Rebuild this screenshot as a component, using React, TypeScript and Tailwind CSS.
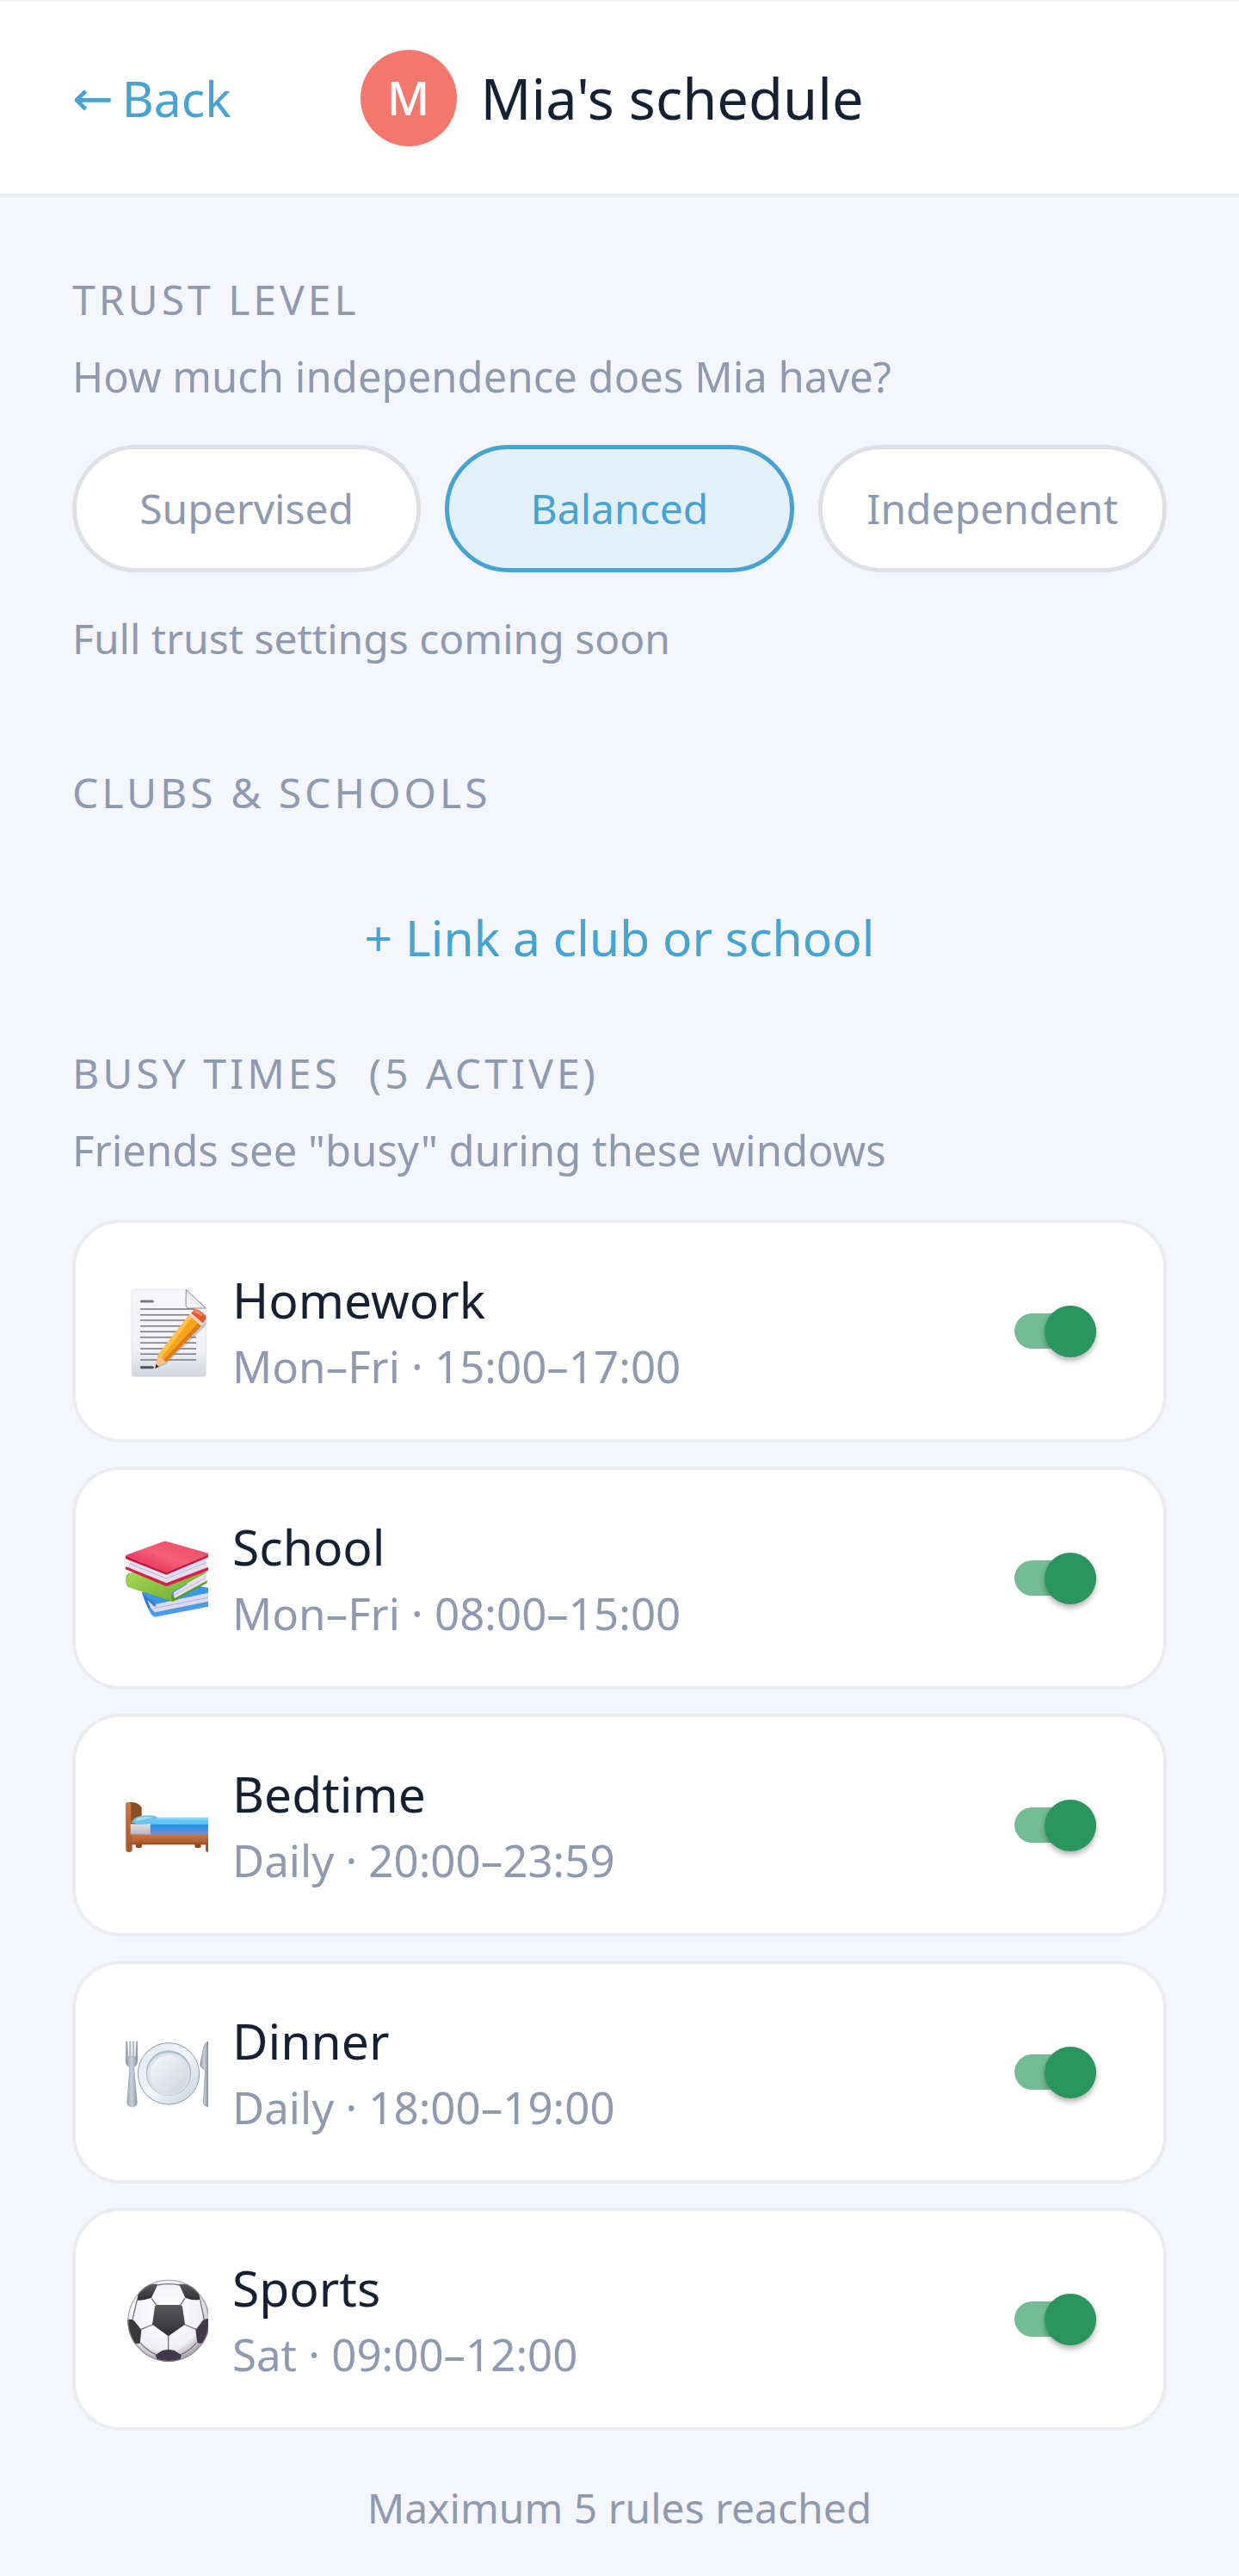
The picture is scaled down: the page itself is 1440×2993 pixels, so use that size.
import { useId, useState } from "react";
import type { ReactNode } from "react";

const trustLevels = ["Supervised", "Balanced", "Independent"];

function NoteIcon() {
  return (
    <svg viewBox="48 32 288 336" className="h-28 w-24 shrink-0" aria-hidden="true">
      <defs>
        <linearGradient id="note-paper" x1="0" y1="0" x2="0" y2="1">
          <stop offset="0" stopColor="#f7f7fa" />
          <stop offset="0.7" stopColor="#f1f1f7" />
          <stop offset="1" stopColor="#d3d4e0" />
        </linearGradient>
        <linearGradient id="note-fold" x1="0" y1="1" x2="1" y2="0">
          <stop offset="0" stopColor="#ffffff" />
          <stop offset="1" stopColor="#cfd0d8" />
        </linearGradient>
      </defs>
      <path d="M78 54H259L328 119V348Q328 357 319 357H78Q69 357 69 348V63Q69 54 78 54Z" fill="url(#note-paper)" stroke="#d9d9e0" strokeWidth="2" />
      <path d="M259 54L328 119H268Q259 117 258 108Z" fill="url(#note-fold)" stroke="#8d8e98" strokeWidth="3" />
      <path d="M103 95H142" stroke="#7b7b83" strokeWidth="9" strokeLinecap="round" />
      <path d="M99 122H290M99 142H294M99 161H294M99 181H294M99 201H294M99 220H294M99 240H294M99 260H294M99 279H294M99 299H294" stroke="#77777f" strokeWidth="4.5" />
      <path d="M103 325H142" stroke="#4f4f58" strokeWidth="9" strokeLinecap="round" />
      <path d="M158 328L190 312L328 180V150L300 140Z" fill="#9a8f90" opacity="0.45" />
      <path d="M161 281L271 140L317 175L190 306L152 328Z" fill="#f9a21a" />
      <path d="M161 281L271 140L282 148L172 292Z" fill="#ffc34d" />
      <path d="M180 300L305 166L317 175L190 306Z" fill="#d97d16" />
      <path d="M161 281Q160 292 174 290Q178 302 190 306L152 328Z" fill="#f6c38e" />
      <path d="M154 314L164 322L151 330Z" fill="#2e2b2d" />
      <path d="M271 145L277 135L322 169L312 181Z" fill="#f0d3c4" />
      <path d="M277 136L285 126Q292 119 304 126L320 138Q330 147 327 156L317 171Z" fill="#e4592f" />
      <path d="M283 130Q292 121 304 128L319 141L313 147L284 131Z" fill="#f58a5c" />
    </svg>
  );
}

function BooksIcon() {
  return (
    <svg viewBox="48 22 288 336" className="h-28 w-24 shrink-0" aria-hidden="true">
      <defs>
        <linearGradient id="book-red" x1="1" y1="0" x2="0" y2="1">
          <stop offset="0" stopColor="#e94a60" />
          <stop offset="0.5" stopColor="#f45f78" />
          <stop offset="1" stopColor="#e01b4c" />
        </linearGradient>
        <linearGradient id="book-green" x1="0" y1="0" x2="1" y2="1">
          <stop offset="0" stopColor="#a6dd5a" />
          <stop offset="1" stopColor="#6aa52c" />
        </linearGradient>
      </defs>
      <path d="M104 238L240 205L336 222V242L152 282Z" fill="#3c96e8" />
      <path d="M124 254L152 280L336 240V272L152 308L134 290Z" fill="#ddd9ee" />
      <path d="M148 294L336 256" stroke="#b6b3d2" strokeWidth="3" />
      <path d="M130 286L150 308L336 270V288L150 324Q142 322 136 314L124 290Z" fill="#4b9ce8" />
      <path d="M104 238L152 278V288L146 286L124 264L134 290L128 296L118 276Z" fill="#2b7cd0" />
      <path d="M60 171Q46 180 50 204Q52 217 60 220L204 269Q212 272 220 267L332 206V196L222 254Z" fill="#5d9a28" />
      <path d="M60 171L130 155L334 168L218 232Q208 237 208 250Q206 266 212 270L60 220Q46 212 50 190Z" fill="url(#book-green)" />
      <path d="M216 238Q214 254 220 258L328 200V172Z" fill="#e5dff0" />
      <path d="M216 248L330 186" stroke="#c4bcd6" strokeWidth="3" />
      <path d="M56 118L190 174L330 116V156L190 210L56 154Z" fill="#e4dff0" />
      <path d="M62 138L190 190L330 134" fill="none" stroke="#b9b4cf" strokeWidth="3" />
      <path d="M48 148L190 206L336 150V162L190 218L48 158Z" fill="#d91f49" />
      <path d="M46 110L190 168L336 106V116L190 177L46 120Z" fill="#c9173f" />
      <path d="M46 110L180 61Q186 59 194 62L336 102V108L190 169Z" fill="url(#book-red)" />
    </svg>
  );
}

function BedIcon() {
  return (
    <svg viewBox="48 14 288 336" className="h-28 w-24 shrink-0" aria-hidden="true">
      <defs>
        <linearGradient id="bed-wood" x1="0" y1="0" x2="0" y2="1">
          <stop offset="0" stopColor="#c9784a" />
          <stop offset="1" stopColor="#a85626" />
        </linearGradient>
        <linearGradient id="bed-side" x1="0" y1="0" x2="0" y2="1">
          <stop offset="0" stopColor="#1a94e0" />
          <stop offset="1" stopColor="#6d8ee2" />
        </linearGradient>
        <linearGradient id="bed-mattress" x1="0" y1="0" x2="0" y2="1">
          <stop offset="0" stopColor="#e3dfe6" />
          <stop offset="1" stopColor="#b9b4bf" />
        </linearGradient>
      </defs>
      <path d="M83 245H105V255Q105 260 98 260H90Q83 260 83 254ZM289 245H311V255Q311 260 304 260H296Q289 260 289 254Z" fill="#8e471f" />
      <path d="M56 102Q64 99 76 101Q98 106 104 120V190H66V106Z" fill="#8a4f23" />
      <path d="M62 212H336V249H62Z" fill="url(#bed-wood)" />
      <path d="M48 108Q48 101 57 101Q67 101 67 110V212L71 240V266Q71 275 60 275Q49 275 49 266Z" fill="url(#bed-wood)" />
      <path d="M327 244H336V275Q327 275 327 266Z" fill="#a85626" />
      <path d="M65 177H138V213H65Z" fill="url(#bed-mattress)" />
      <path d="M134 178L158 154H336V185H134Z" fill="#61c5f3" />
      <path d="M152 160L160 154H336V163Z" fill="#8bd9f8" />
      <path d="M134 178H336V213H140Q134 213 134 207Z" fill="url(#bed-side)" />
      <path d="M70 168Q80 147 124 147Q152 146 158 153Q152 168 136 176Q100 182 70 172Z" fill="#6cc5ee" />
      <path d="M84 158Q110 148 144 153Q116 162 84 166Z" fill="#a3e0f7" />
      <path d="M62 245H336" stroke="#9b4d22" strokeWidth="5" />
    </svg>
  );
}

function PlateIcon() {
  return (
    <svg viewBox="48 20 288 336" className="h-28 w-24 shrink-0" aria-hidden="true">
      <defs>
        <linearGradient id="plate-rim" x1="0" y1="0" x2="1" y2="1">
          <stop offset="0" stopColor="#dfe6ec" />
          <stop offset="0.5" stopColor="#f2f6fb" />
          <stop offset="1" stopColor="#c5cfda" />
        </linearGradient>
        <linearGradient id="plate-inner" x1="0" y1="0" x2="1" y2="1">
          <stop offset="0" stopColor="#f6f8fa" />
          <stop offset="1" stopColor="#ccd4db" />
        </linearGradient>
        <linearGradient id="plate-steel" x1="0" y1="0" x2="1" y2="0">
          <stop offset="0" stopColor="#8e98a5" />
          <stop offset="0.5" stopColor="#c9d0d9" />
          <stop offset="1" stopColor="#8792a2" />
        </linearGradient>
      </defs>
      <circle cx="198" cy="192" r="107" fill="url(#plate-rim)" stroke="#8f9ba8" strokeWidth="3" />
      <circle cx="198" cy="190" r="79" fill="#aebbc8" />
      <circle cx="198" cy="193" r="75" fill="#dbe3ea" />
      <circle cx="200" cy="194" r="67" fill="url(#plate-inner)" />
      <path d="M50 80H54L56 132H61L62 80H66L67 132H72L73 80H77L78 132H83L85 80H89L90 145Q90 161 77 170L88 290Q89 307 71 308Q52 307 53 290L62 170Q46 161 48 145Z" fill="url(#plate-steel)" stroke="#7d8896" strokeWidth="1" />
      <path d="M336 80Q322 84 319 108L308 158Q308 172 326 180L319 292Q321 306 336 307Z" fill="url(#plate-steel)" stroke="#7d8896" strokeWidth="2" />
    </svg>
  );
}

function BallIcon() {
  return (
    <svg viewBox="48 26 288 336" className="h-28 w-24 shrink-0" aria-hidden="true">
      <defs>
        <radialGradient id="ball-skin" cx="0.45" cy="0.4" r="0.6">
          <stop offset="0" stopColor="#ffffff" />
          <stop offset="0.75" stopColor="#f1f0f4" />
          <stop offset="1" stopColor="#a7a4ab" />
        </radialGradient>
        <linearGradient id="ball-patch" x1="0" y1="0" x2="0" y2="1">
          <stop offset="0" stopColor="#5a5a5c" />
          <stop offset="1" stopColor="#2f2e31" />
        </linearGradient>
        <clipPath id="ball-clip">
          <circle cx="198" cy="198" r="143" />
        </clipPath>
      </defs>
      <circle cx="198" cy="198" r="143" fill="url(#ball-skin)" />
      <g clipPath="url(#ball-clip)">
        <path d="M155 143L138 120M240 143L254 120M142 212L102 228M254 212L294 228M197 251V300M88 126L72 194M308 126L322 194M100 276Q122 302 154 316M294 276Q272 302 242 316M160 74Q198 66 236 74" fill="none" stroke="#77757b" strokeWidth="4" />
        <path d="M155 143H238Q244 143 246 150L255 211L197 252L141 211L150 148Z" fill="url(#ball-patch)" />
        <path d="M88 124Q90 90 126 72L161 70L138 118Q110 128 88 127Z" fill="url(#ball-patch)" />
        <path d="M234 70L270 72Q306 90 308 124Q286 130 256 118Z" fill="url(#ball-patch)" />
        <path d="M50 196Q62 190 76 196L103 230L98 277L74 278Q54 240 50 196Z" fill="#39383a" />
        <path d="M346 192Q332 188 318 196L292 230L298 276L322 278Q344 240 346 192Z" fill="#43384a" />
        <path d="M152 318L176 302Q198 296 218 302L243 318L238 334Q198 350 158 334Z" fill="#43384a" />
      </g>
      <circle cx="198" cy="198" r="141" fill="none" stroke="#8f8d92" strokeWidth="4" opacity="0.7" />
    </svg>
  );
}

interface Rule {
  name: string;
  time: string;
  icon: ReactNode;
}

const rules: Rule[] = [
  { name: "Homework", time: "Mon–Fri · 15:00–17:00", icon: <NoteIcon /> },
  { name: "School", time: "Mon–Fri · 08:00–15:00", icon: <BooksIcon /> },
  { name: "Bedtime", time: "Daily · 20:00–23:59", icon: <BedIcon /> },
  { name: "Dinner", time: "Daily · 18:00–19:00", icon: <PlateIcon /> },
  { name: "Sports", time: "Sat · 09:00–12:00", icon: <BallIcon /> },
];

function RuleCard({ rule }: { rule: Rule }) {
  const id = useId();
  const [active, setActive] = useState(true);

  return (
    <li className="flex items-center rounded-[56px] border-4 border-[#ecedf0] bg-white py-[51px] pr-[78px] pl-[58px]">
      {rule.icon}
      <div className="ml-7 flex flex-1 flex-col gap-[5px]">
        <label htmlFor={id} className="text-[57px] leading-[76px] text-[#152032]">
          {rule.name}
        </label>
        <p className="text-[51px] leading-[68px]">{rule.time}</p>
      </div>
      <input
        id={id}
        type="checkbox"
        role="switch"
        checked={active}
        onChange={() => setActive(!active)}
        className="flex h-[41px] w-[95px] shrink-0 cursor-pointer appearance-none items-center rounded-full bg-[#b5b9c2] before:size-[60px] before:shrink-0 before:rounded-full before:bg-white before:shadow-[0_4px_6px_rgba(0,0,0,0.3)] checked:justify-end checked:bg-[#73bc95] checked:before:bg-[#2a965d]"
      />
    </li>
  );
}

export default function App() {
  const [trust, setTrust] = useState("Balanced");

  return (
    <div className="min-h-screen bg-[#f4f6fc] font-['Noto_Sans',sans-serif]">
      <header className="flex h-[229px] items-center gap-[150px] border-t-2 border-b-4 border-t-[#f5f5f7] border-b-[#ecedf0] bg-white px-[84px]">
        <button type="button" className="flex items-center gap-[10px] text-[57px] leading-[76px] whitespace-nowrap text-[#46a3d2]">
          <span className="font-['DejaVu_Sans',sans-serif]">←</span>
          <span>Back</span>
        </button>
        <div className="flex items-center gap-7">
          <span className="flex size-28 shrink-0 items-center justify-center rounded-full bg-[#f4776d] text-[54px] font-medium text-white">
            M
          </span>
          <h1 className="text-[65px] leading-[84px] whitespace-nowrap text-[#152032]">Mia's schedule</h1>
        </div>
      </header>

      <main className="px-[84px] pt-[85px] pb-[44px] text-[48px] leading-[68px] text-[#8f9ab1]">
        <section>
          <h2 className="tracking-[4px]">TRUST LEVEL</h2>
          <p className="mt-[21px] text-[49px] leading-[68px]">How much independence does Mia have?</p>
          <div className="mt-[46px] grid grid-cols-3 gap-7">
            {trustLevels.map((level) => (
              <button
                key={level}
                type="button"
                aria-pressed={level === trust}
                onClick={() => setTrust(level)}
                className={
                  level === trust
                    ? "h-[148px] rounded-full border-5 border-[#46a3d2] bg-[#e4f0f9] text-[#46a3d2]"
                    : "h-[148px] rounded-full border-5 border-[#dfe0e5] bg-white"
                }
              >
                {level}
              </button>
            ))}
          </div>
          <p className="mt-[43px]">Full trust settings coming soon</p>
        </section>

        <section className="mt-[111px]">
          <h2 className="tracking-[4px]">CLUBS &amp; SCHOOLS</h2>
          <button type="button" className="mx-auto mt-[96px] block text-[57px] leading-[76px] text-[#46a3d2]">
            + Link a club or school
          </button>
        </section>

        <section className="mt-[86px]">
          <h2 className="tracking-[4px] whitespace-pre">BUSY TIMES  (5 ACTIVE)</h2>
          <p className="mt-[21px] text-[49px] leading-[68px]">Friends see "busy" during these windows</p>
          <ul className="mt-[47px] flex flex-col gap-7">
            {rules.map((rule) => (
              <RuleCard key={rule.name} rule={rule} />
            ))}
          </ul>
          <p className="mt-[56px] text-center">Maximum 5 rules reached</p>
        </section>
      </main>
    </div>
  );
}
